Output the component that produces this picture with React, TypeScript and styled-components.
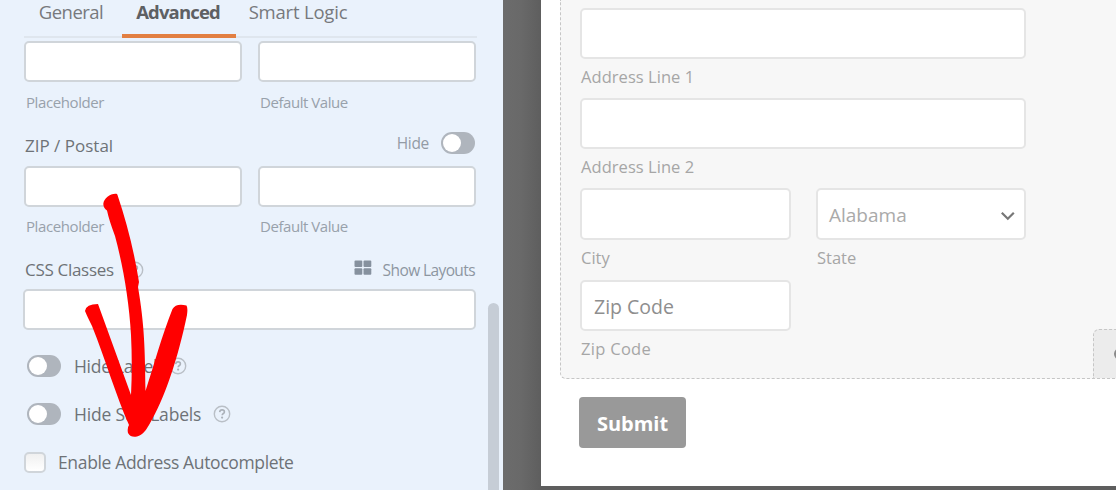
import React, { useState } from "react";
import styled, { createGlobalStyle } from "styled-components";

const App = () => {
  const [hideZip, setHideZip] = useState<boolean>(false);
  const [hideLabel, setHideLabel] = useState<boolean>(false);
  const [hideSubLabels, setHideSubLabels] = useState<boolean>(false);

  return (
    <>
      <GlobalStyle />
      <Wrapper>
        <Sidebar>
          <Tabs>
            <Tab $width={98} $shift={4}><Text $size={18.5} $spacing={-0.5}>General</Text></Tab>
            <Tab $width={114} $shift={2} $active><Text $size={18.5} $spacing={-0.85}>Advanced</Text></Tab>
            <Tab $width={126} $shift={2}><Text $size={18.5} $spacing={-0.2}>Smart Logic</Text></Tab>
          </Tabs>

          <Pair $top={3}>
            <OptionInput />
            <OptionInput />
          </Pair>
          <Hints $height={44} $top={8}>
            <Text $size={15} $spacing={-0.4}>Placeholder</Text>
            <Text $size={15} $spacing={-0.45}>Default Value</Text>
          </Hints>

          <OptionHeader $height={40}>
            <Label><Text $size={17}>ZIP / Postal</Text></Label>
            <HideToggle>
              <Text $size={15.5} $spacing={-0.3}>Hide</Text>
              <Toggle $on={hideZip} onClick={() => setHideZip(!hideZip)} />
            </HideToggle>
          </OptionHeader>
          <Pair $top={0}>
            <OptionInput />
            <OptionInput />
          </Pair>
          <Hints $height={40} $top={7}>
            <Text $size={15} $spacing={-0.4}>Placeholder</Text>
            <Text $size={15} $spacing={-0.45}>Default Value</Text>
          </Hints>

          <OptionHeader $height={42} $top={3}>
            <Label>
              <Text $size={17} $spacing={-0.3}>CSS Classes</Text>
              <HelpIcon />
            </Label>
            <LayoutsLink>
              <LayoutsIcon />
              <Text $size={15.5} $spacing={-0.6}>Show Layouts</Text>
            </LayoutsLink>
          </OptionHeader>
          <ClassesInput />

          <ToggleRow>
            <Toggle $on={hideLabel} onClick={() => setHideLabel(!hideLabel)} />
            <Text $size={17.5} $spacing={-0.3}>Hide Label</Text>
            <HelpIcon />
          </ToggleRow>
          <ToggleRow>
            <Toggle $on={hideSubLabels} onClick={() => setHideSubLabels(!hideSubLabels)} />
            <Text $size={17.5} $spacing={-0.2}>Hide Sub Labels</Text>
            <HelpIcon />
          </ToggleRow>
          <CheckRow>
            <Checkbox />
            <Text $size={17.5} $spacing={-0.35}>Enable Address Autocomplete</Text>
          </CheckRow>
          <Scrollbar />
        </Sidebar>

        <Preview>
          <FormCard>
            <AddressField>
              <Field $width={446}>
                <FormInput />
                <SubLabel><Text $size={16.5} $spacing={0.05}>Address Line 1</Text></SubLabel>
              </Field>
              <Field $width={446}>
                <FormInput />
                <SubLabel><Text $size={16.5} $spacing={0.05}>Address Line 2</Text></SubLabel>
              </Field>
              <FieldRow>
                <Field $width={211}>
                  <FormInput $height={52} />
                  <SubLabel $height={40}><Text $size={16.5}>City</Text></SubLabel>
                </Field>
                <Field $width={210}>
                  <FormInput $height={52} $muted>
                    <Text $size={19}>Alabama</Text>
                    <Chevron />
                  </FormInput>
                  <SubLabel $height={40}><Text $size={16.5}>State</Text></SubLabel>
                </Field>
              </FieldRow>
              <Field $width={211}>
                <FormInput>
                  <Text $size={19.5}>Zip Code</Text>
                </FormInput>
                <SubLabel><Text $size={16.5} $spacing={0.3}>Zip Code</Text></SubLabel>
              </Field>
              <HandleTab>
                <HandleDot />
              </HandleTab>
            </AddressField>
            <Submit><Text $size={20}>Submit</Text></Submit>
          </FormCard>
        </Preview>

        <Arrow />
      </Wrapper>
    </>
  );
};

const HelpIcon = () => (
  <HelpSvg width="18" height="18" viewBox="0 0 18 18" fill="none">
    <circle cx="9" cy="9" r="7.7" stroke="#b9bfc6" strokeWidth="1.4" />
    <path d="M6.7 7.1c.1-1.4 1.1-2.2 2.4-2.2s2.3.8 2.3 2c0 1.6-2.2 1.6-2.2 3.3" stroke="#abb1b9" strokeWidth="1.6" />
    <circle cx="9.1" cy="12.6" r="1.1" fill="#abb1b9" />
  </HelpSvg>
);

const LayoutsIcon = () => (
  <svg width="18" height="16" viewBox="0 0 18 16" fill="#86919e">
    <rect x="0.5" y="0.5" width="7.8" height="6.5" rx="1" />
    <rect x="9.5" y="0.5" width="7.8" height="6.5" rx="1" />
    <rect x="0.5" y="8.3" width="7.8" height="6.5" rx="1" />
    <rect x="9.5" y="8.3" width="7.8" height="6.5" rx="1" />
  </svg>
);

const Chevron = () => (
  <svg width="16" height="12" viewBox="0 0 16 12" fill="none">
    <path d="M1.800 3.800l6 6 6-6" stroke="#777" strokeWidth="2.2" />
  </svg>
);

const Arrow = () => (
  <ArrowSvg width="110" height="250" viewBox="80 190 110 250">
    <path
      fill="#ff0000"
      d="M117 194C111 193 104 198 103.300 204Q103.500 208 107 210.500Q109 220 115 236C123 266 129 300 131 335Q132.500 365 131 395L98 304Q86 304 85 311Q87 316 92 326C105 358 116 396 129 425Q127 428 128 433Q131 438 137 436.500C143 435 146 430 149 425C165 398 178 358 187 315Q188 308 186.500 305.500Q176 303 172.500 309C162 335 154 365 145.500 391C145 350 144.500 325 138 287L139 282Q132 238 117.500 195Z"
    />
  </ArrowSvg>
);

const GlobalStyle = createGlobalStyle`
  * {
    box-sizing: border-box;
  }
  body {
    margin: 0;
    overflow: hidden;
    font-family: "Open Sans", "Noto Sans", sans-serif;
  }
`;

const Wrapper = styled.div`
  position: relative;
  display: flex;
  width: 1116px;
  height: 490px;
  overflow: hidden;
`;

const Text = styled.span<{ $size: number; $spacing?: number }>`
  font-size: ${(p) => p.$size}px;
  letter-spacing: ${(p) => p.$spacing ?? 0}px;
  line-height: 24px;
  white-space: nowrap;
`;

const Sidebar = styled.div`
  position: relative;
  flex: none;
  width: 503px;
  height: 490px;
  padding: 0 27px 0 24px;
  background-color: #eaf2fc;
  color: #6e7277;
`;

const Tabs = styled.div`
  display: flex;
  height: 38px;
  width: 453px;
  box-shadow: inset 0 -2px 0 #dfe6ee;
`;

const Tab = styled.div<{ $width: number; $shift: number; $active?: boolean }>`
  display: flex;
  justify-content: center;
  width: ${(p) => p.$width}px;
  height: 38px;
  padding-right: ${(p) => p.$shift}px;
  font-weight: ${(p) => (p.$active ? 700 : 400)};
  color: ${(p) => (p.$active ? "#5e6063" : "#77797c")};
  border-bottom: 4px solid ${(p) => (p.$active ? "#e27f42" : "transparent")};
`;

const Pair = styled.div<{ $top: number }>`
  display: grid;
  grid-template-columns: 218px 218px;
  gap: 16px;
  padding-top: ${(p) => p.$top}px;
`;

const OptionInput = styled.input`
  display: block;
  width: 100%;
  height: 41px;
  padding: 0 10px;
  border: 2px solid #d0d5da;
  border-radius: 5px;
  background-color: #fff;
  font: inherit;
  outline: none;
`;

const ClassesInput = styled(OptionInput)`
  width: 453px;
  margin-left: -1px;
`;

const Hints = styled.div<{ $height: number; $top: number }>`
  display: grid;
  grid-template-columns: 218px 218px;
  gap: 16px;
  height: ${(p) => p.$height}px;
  padding: ${(p) => p.$top}px 0 0 2px;
  color: #98a1ab;
`;

const OptionHeader = styled.div<{ $height: number; $top?: number }>`
  display: flex;
  align-items: center;
  justify-content: space-between;
  width: 451px;
  height: ${(p) => p.$height}px;
  padding-top: ${(p) => p.$top ?? 0}px;
`;

const Label = styled.div`
  display: flex;
  align-items: center;
  gap: 12px;
  padding-left: 1px;
`;

const HideToggle = styled.div`
  display: flex;
  align-items: center;
  gap: 12px;
  padding-bottom: 6px;
  color: #939ba5;
`;

const LayoutsLink = styled.div`
  display: flex;
  align-items: center;
  gap: 11px;
  color: #8d96a1;

  svg {
    margin-bottom: 3px;
  }
`;

const Toggle = styled.button<{ $on: boolean }>`
  display: flex;
  justify-content: ${(p) => (p.$on ? "flex-end" : "flex-start")};
  align-items: center;
  width: 34px;
  height: 22px;
  padding: 0 2px;
  border: none;
  border-radius: 11px;
  background-color: ${(p) => (p.$on ? "#e27730" : "#afb5bd")};

  &::after {
    content: "";
    width: 18px;
    height: 18px;
    border-radius: 50%;
    background-color: #fff;
  }
`;

const HelpSvg = styled.svg`
  flex: none;
`;

const ToggleRow = styled.div`
  display: flex;
  align-items: center;
  height: 24px;
  margin-top: 24px;
  padding-left: 3px;

  ${Text} {
    margin: 0 12px 0 13px;
  }
`;

const CheckRow = styled.div`
  display: flex;
  align-items: center;
  gap: 12px;
  height: 24px;
  margin-top: 24px;
`;

const Checkbox = styled.div`
  width: 22px;
  height: 21px;
  border: 2px solid #d0d5da;
  border-radius: 5px;
  background: linear-gradient(#f0f0f0, #fff);
`;

const Scrollbar = styled.div`
  position: absolute;
  top: 303px;
  right: 4px;
  width: 11px;
  height: 200px;
  border-radius: 6px;
  background-color: #c6cdd6;
`;

const Preview = styled.div`
  flex: 1;
  padding-left: 38px;
  background: linear-gradient(90deg, #6c6c6c 0, #696969 18px, #5e5e5e 38px);
`;

const FormCard = styled.div`
  height: 486px;
  padding-left: 19px;
  background-color: #fff;
`;

const AddressField = styled.div`
  position: relative;
  height: 379px;
  padding: 8px 0 0 19px;
  border: 1px dashed #c6c6c6;
  border-width: 0 0 1px 1px;
  border-bottom-left-radius: 6px;
  background-color: #f7f7f7;
`;

const Field = styled.div<{ $width: number }>`
  width: ${(p) => p.$width}px;
`;

const FieldRow = styled.div`
  display: flex;
  gap: 25px;
`;

const FormInput = styled.div<{ $height?: number; $muted?: boolean }>`
  display: flex;
  align-items: center;
  justify-content: space-between;
  height: ${(p) => p.$height ?? 51}px;
  padding: 2px 8px 0 ${(p) => (p.$muted ? 11 : 12)}px;
  border: 2px solid #e5e5e5;
  border-radius: 5px;
  background-color: #fff;
  color: ${(p) => (p.$muted ? "#aaa" : "#8e8e8e")};
`;

const SubLabel = styled.div<{ $height?: number }>`
  height: ${(p) => p.$height ?? 39}px;
  padding: 6px 0 0 1px;
  color: #a6a6a6;
`;

const HandleTab = styled.div`
  position: absolute;
  right: 0;
  bottom: 0;
  display: flex;
  align-items: center;
  justify-content: flex-end;
  width: 23px;
  height: 49px;
  overflow: hidden;
  border: 1px dashed #c6c6c6;
  border-width: 1px 0 0 1px;
  border-top-left-radius: 6px;
  background-color: #ececec;
`;

const HandleDot = styled.div`
  flex: none;
  width: 12px;
  height: 12px;
  margin-right: -10px;
  border: 2px solid #8a8a8a;
  border-radius: 50%;
`;

const Submit = styled.button`
  display: flex;
  align-items: center;
  justify-content: center;
  width: 107px;
  height: 51px;
  margin: 18px 0 0 19px;
  padding: 2px 0 0;
  border: none;
  border-radius: 4px;
  background-color: #999;
  color: #fff;
  font-family: inherit;
  font-weight: 700;
`;

const ArrowSvg = styled.svg`
  position: absolute;
  top: 190px;
  left: 80px;
  pointer-events: none;
`;

export default App;
